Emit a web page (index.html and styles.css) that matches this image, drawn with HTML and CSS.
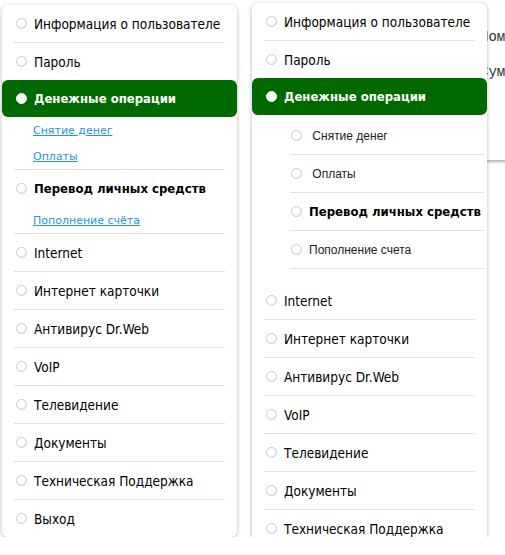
FILE: index.html
```html
<!DOCTYPE html>
<html lang="ru">
<head>
    <meta charset="UTF-8">
    <title>Личный кабинет</title>
    <link rel="stylesheet" href="styles.css">
</head>
<body>
    <div class="page">
        <nav class="side-menu">
            <ul class="menu">
                <li class="row"><a href="#"><span class="dot"></span>Информация о пользователе</a></li>
                <li class="row plain"><a href="#"><span class="dot"></span>Пароль</a></li>
                <li class="row active"><a href="#"><span class="dot"></span>Денежные операции</a></li>
                <li class="sub plain"><a href="#">Снятие денег</a></li>
                <li class="sub"><a href="#">Оплаты</a></li>
                <li class="row plain bold"><a href="#"><span class="dot"></span>Перевод личных средств</a></li>
                <li class="sub"><a href="#">Пополнение счёта</a></li>
                <li class="row"><a href="#"><span class="dot"></span>Internet</a></li>
                <li class="row"><a href="#"><span class="dot"></span>Интернет карточки</a></li>
                <li class="row"><a href="#"><span class="dot"></span>Антивирус Dr.Web</a></li>
                <li class="row"><a href="#"><span class="dot"></span>VoIP</a></li>
                <li class="row"><a href="#"><span class="dot"></span>Телевидение</a></li>
                <li class="row"><a href="#"><span class="dot"></span>Документы</a></li>
                <li class="row"><a href="#"><span class="dot"></span>Техническая Поддержка</a></li>
                <li class="row plain"><a href="#"><span class="dot"></span>Выход</a></li>
            </ul>
        </nav>

        <main class="workspace">
            <div class="card">
                <p>Номер договора: 10245</p>
                <p>Сумма на счёте: 350 руб.</p>
            </div>

            <nav class="side-menu dropdown">
                <ul class="menu">
                    <li class="row"><a href="#"><span class="dot"></span>Информация о пользователе</a></li>
                    <li class="row plain"><a href="#"><span class="dot"></span>Пароль</a></li>
                    <li class="row active"><a href="#"><span class="dot"></span>Денежные операции</a></li>
                    <li class="submenu">
                        <ul>
                            <li class="opt"><a href="#"><span class="dot"></span>&nbsp;Снятие денег</a></li>
                            <li class="opt"><a href="#"><span class="dot"></span>&nbsp;Оплаты</a></li>
                            <li class="opt bold"><a href="#"><span class="dot"></span>Перевод личных средств</a></li>
                            <li class="opt"><a href="#"><span class="dot"></span>Пополнение счета</a></li>
                        </ul>
                    </li>
                    <li class="row"><a href="#"><span class="dot"></span>Internet</a></li>
                    <li class="row"><a href="#"><span class="dot"></span>Интернет карточки</a></li>
                    <li class="row"><a href="#"><span class="dot"></span>Антивирус Dr.Web</a></li>
                    <li class="row"><a href="#"><span class="dot"></span>VoIP</a></li>
                    <li class="row"><a href="#"><span class="dot"></span>Телевидение</a></li>
                    <li class="row"><a href="#"><span class="dot"></span>Документы</a></li>
                    <li class="row"><a href="#"><span class="dot"></span>Техническая Поддержка</a></li>
                    <li class="row plain"><a href="#"><span class="dot"></span>Выход</a></li>
                </ul>
            </nav>
        </main>
    </div>
</body>
</html>
```

FILE: styles.css
```css
body {
    margin: 0;
    background: #ffffff;
    font-family: "DejaVu Sans Condensed", "DejaVu Sans", sans-serif;
    font-size: 13.5px;
    color: #000;
    overflow: hidden;
}
ul {
    list-style: none;
    margin: 0;
    padding: 0;
}
a {
    color: inherit;
    text-decoration: none;
    white-space: nowrap;
}
.page {
    display: flex;
    align-items: flex-start;
}
.side-menu {
    flex: none;
    width: 235px;
    margin: 5px 0 0 2px;
    background: #fff;
    border-radius: 6px;
    box-shadow: 0 1px 4px rgba(0, 0, 0, 0.28);
}
.row {
    margin: 0 12px;
    border-bottom: 1px solid #e2e2e2;
}
.row a {
    display: flex;
    align-items: center;
    gap: 7px;
    height: 37px;
    padding-left: 2px;
}
.row.plain {
    border-bottom: none;
}
.row.active {
    margin: 0;
    border: none;
    border-radius: 6px;
    background: #006a00;
    color: #fff;
}
.row.active a {
    padding-left: 14px;
}
.active a,
.bold a {
    font-size: 13px;
    font-weight: bold;
}
.dot {
    flex: none;
    box-sizing: border-box;
    width: 11px;
    height: 11px;
    border-radius: 50%;
    border: 1px solid #cacaca;
    background: radial-gradient(circle at 40% 35%, #fff 45%, #e2e2e2 100%);
}
.active .dot {
    border-color: #fff;
    background: #fff;
}
.sub {
    margin: 0 12px;
    border-bottom: 1px solid #e2e2e2;
}
.sub.plain {
    border-bottom: none;
}
.sub a {
    display: flex;
    align-items: center;
    height: 26px;
    padding-left: 19px;
    font-family: "DejaVu Sans", sans-serif;
    font-size: 11px;
    color: #1b9ad6;
    text-decoration: underline;
}

/* content behind the dropdown */
.workspace {
    position: relative;
    flex: 1;
    min-width: 0;
    margin-left: 15px;
}
.card {
    box-sizing: border-box;
    width: 320px;
    height: 155px;
    margin: 5px 0 0 208px;
    padding: 23px 0 0 20px;
    background: #fff;
    border-radius: 6px;
    box-shadow: 0 2px 3px rgba(0, 0, 0, 0.3);
    font-family: "Liberation Mono", monospace;
    font-size: 14px;
    line-height: 18px;
    color: #333;
    white-space: nowrap;
}
.card p {
    margin: 0 0 17px;
}
.dropdown {
    position: absolute;
    top: 3px;
    left: 0;
    margin: 0;
}
.submenu ul {
    padding-top: 2px;
    margin-bottom: 13px;
}
.opt {
    margin: 0 3px 0 38px;
    border-bottom: 1px solid #e2e2e2;
}
.opt a {
    display: flex;
    align-items: center;
    gap: 7px;
    height: 37px;
    padding-left: 1px;
    font-family: "Liberation Sans", Arial, sans-serif;
    font-size: 12px;
    color: #222;
}
.opt.bold a {
    font-family: "DejaVu Sans Condensed", "DejaVu Sans", sans-serif;
    font-size: 13px;
    color: #000;
}
```
